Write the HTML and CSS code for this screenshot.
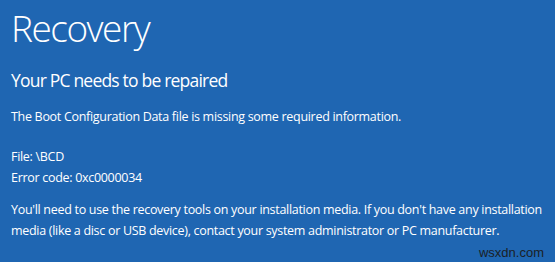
FILE: index.html
```html
<!DOCTYPE html>
<html>
<head>
<meta charset="utf-8">
<link rel="stylesheet" href="styles.css">
</head>
<body>
<main class="screen">
  <h1 class="title">Recovery</h1>
  <h2 class="subtitle">Your PC needs to be repaired</h2>
  <p class="text">The Boot Configuration Data file is missing some required information.</p>
  <p class="text details">File: \BCD<br>Error code: 0xc0000034</p>
  <p class="text advice">You'll need to use the recovery tools on your installation media. If you don't have any installation<br>media (like a disc or USB device), contact your system administrator or PC manufacturer.</p>
  <div class="watermark">wsxdn.com</div>
</main>
</body>
</html>
```
FILE: styles.css
```css
html, body {
  margin: 0;
  padding: 0;
  width: 555px;
  height: 262px;
  overflow: hidden;
}
.screen {
  box-sizing: border-box;
  width: 555px;
  height: 262px;
  background: #1f66b2;
  color: #ffffff;
  font-family: "Open Sans", "Noto Sans", sans-serif;
  padding: 5px 0 0 11px;
  position: relative;
}
.title {
  margin: 0;
  font-weight: 300;
  font-size: 37px;
  line-height: 46px;
  letter-spacing: -1.5px;
}
.subtitle {
  margin: 18px 0 0 0;
  font-weight: 400;
  font-size: 17.5px;
  line-height: 22px;
  letter-spacing: -0.8px;
}
.text {
  margin: 15px 0 0 0;
  font-size: 12.5px;
  line-height: 21px;
  letter-spacing: -0.3px;
  white-space: nowrap;
}
.details {
  margin-top: 19px;
}
.advice {
  margin-top: 11px;
}
.watermark {
  position: absolute;
  right: 11px;
  bottom: 2px;
  color: #1b1f26;
  font-family: "Liberation Sans", sans-serif;
  font-size: 13px;
}
```
